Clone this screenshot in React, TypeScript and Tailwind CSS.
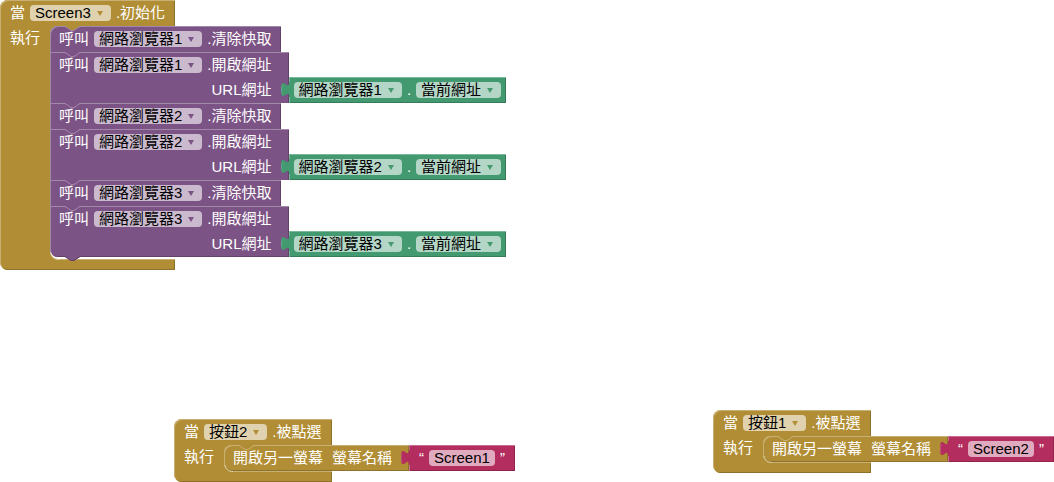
import type { ReactNode } from "react";

type Tone = "gold" | "purple" | "green" | "pink";

const surface: Record<Tone, string> = {
  gold: "bg-[#b18e35] shadow-[inset_1px_1px_0_#c8b072,inset_-1px_-1px_0_#8e722a]",
  purple: "bg-[#7c5385] shadow-[inset_1px_1px_0_#a387aa,inset_-1px_0_0_#63426a]",
  green: "bg-[#439970] shadow-[inset_1px_1px_0_#7bb89b,inset_-1px_-1px_0_#367a5a]",
  pink: "bg-[#b32d5e] shadow-[inset_1px_1px_0_#ca6c8e,inset_-1px_-1px_0_#8f244b]",
};

const purpleEnd = "bg-[#7c5385] shadow-[inset_1px_1px_0_#a387aa,inset_-1px_-1px_0_#63426a]";

const pill: Record<Tone, string> = {
  gold: "bg-[#e0d2ae]",
  purple: "bg-[#cbbace]",
  green: "bg-[#b4d6c6]",
  pink: "bg-[#e1abbf]",
};

const color: Record<Tone, string> = {
  gold: "#b18e35",
  purple: "#7c5385",
  green: "#439970",
  pink: "#b32d5e",
};

const light: Record<Tone, string> = {
  gold: "#c8b072",
  purple: "#a387aa",
  green: "#7bb89b",
  pink: "#ca6c8e",
};

function Dropdown({ tone, label, value }: { tone: Tone; label: string; value: string }) {
  return (
    <span className="relative flex">
      <select
        aria-label={label}
        defaultValue={value}
        className={`field-sizing-content h-4 appearance-none rounded py-0 pr-5 pl-[5px] leading-4 text-black ${pill[tone]}`}
      >
        <option>{value}</option>
      </select>
      <svg
        className="pointer-events-none absolute top-[6px] right-2"
        width="6"
        height="5"
        viewBox="0 0 6 5"
        aria-hidden="true"
      >
        <path d="M0 0H6L3 5Z" fill={color[tone]} />
      </svg>
    </span>
  );
}

function Notch({ above, own }: { above: Tone; own: Tone }) {
  return (
    <svg className="absolute top-0 left-[15px]" width="15" height="6" viewBox="0 0 15 6" aria-hidden="true">
      <path d="M0 0L6 4H9L15 0Z" fill={color[above]} />
      <path d="M0 .5L6 4.5H9L15 .5" fill="none" stroke={light[own]} />
    </svg>
  );
}

function Bump() {
  return (
    <svg className="absolute -bottom-1 left-[15px] z-10" width="15" height="5" viewBox="0 0 15 5" aria-hidden="true">
      <path d="M0 0V1L6 5H9L15 1V0Z" fill="#7c5385" />
      <path d="M0 .5L6 4.5H9L15 .5" fill="none" stroke="#63426a" />
    </svg>
  );
}

function ValueBlock({ tone, children }: { tone: Tone; children: ReactNode }) {
  return (
    <div className={`relative flex h-[26px] items-center gap-[5px] ${surface[tone]}`}>
      <svg className="absolute top-[5px] -left-2" width="9" height="15" viewBox="0 0 9 15" aria-hidden="true">
        <path d="M9 0H8C8 10 0 -8 0 7.5S8 5 8 15H9Z" fill={color[tone]} />
        <path d="M1.5 3.5C.8 4.5 .5 6 .5 8C.5 10 .8 11 1.5 11.5" fill="none" stroke={light[tone]} strokeOpacity=".6" />
      </svg>
      {children}
    </div>
  );
}

function ClearCache({ browser, above }: { browser: string; above: Tone }) {
  return (
    <div
      className={`relative flex h-[26px] w-max items-center gap-[5px] px-[9px] ${
        above === "gold" ? "rounded-tl-lg" : ""
      } ${surface.purple}`}
    >
      <Notch above={above} own="purple" />
      <span>呼叫</span>
      <Dropdown tone="purple" label="元件" value={browser} />
      <span>.清除快取</span>
    </div>
  );
}

function OpenAddress({ browser, last }: { browser: string; last: boolean }) {
  return (
    <div className="flex w-max items-end">
      <div className={`relative pr-[17px] pl-[9px] ${last ? `rounded-bl-lg ${purpleEnd}` : surface.purple}`}>
        <Notch above="purple" own="purple" />
        <div className="flex h-[26px] items-center gap-[5px]">
          <span>呼叫</span>
          <Dropdown tone="purple" label="元件" value={browser} />
          <span>.開啟網址</span>
        </div>
        <div className="flex h-[25px] items-center justify-end pb-[2px]">URL網址</div>
        {last && <Bump />}
      </div>
      <ValueBlock tone="green">
        <span className="pl-[5px]">
          <Dropdown tone="green" label="元件" value={browser} />
        </span>
        <span>.</span>
        <span className="pr-[5px]">
          <Dropdown tone="green" label="屬性" value="當前網址" />
        </span>
      </ValueBlock>
    </div>
  );
}

function OpenScreen({ screen }: { screen: string }) {
  return (
    <div className="flex w-max">
      <div className={`relative flex h-[26px] items-center gap-[9px] rounded-l-lg pr-[17px] pl-[9px] ${surface.gold}`}>
        <Notch above="gold" own="gold" />
        <span>開啟另一螢幕</span>
        <span>螢幕名稱</span>
      </div>
      <ValueBlock tone="pink">
        <span className="pl-[10px]">“</span>
        <input
          aria-label="螢幕名稱"
          defaultValue={screen}
          className={`field-sizing-content h-4 rounded px-[5px] leading-4 text-black ${pill.pink}`}
        />
        <span className="pr-[10px]">”</span>
      </ValueBlock>
    </div>
  );
}

function EventBlock({
  target,
  event,
  gap = false,
  children,
}: {
  target: string;
  event: string;
  gap?: boolean;
  children: ReactNode;
}) {
  return (
    <section className={`grid w-max rounded-l-lg ${surface.gold}`}>
      <header className="flex h-[26px] items-center gap-[5px] px-[10px]">
        <span>當</span>
        <Dropdown tone="gold" label="元件" value={target} />
        <span>.{event}</span>
      </header>
      <div className="flex w-0">
        <div className="flex h-[25px] w-[50px] shrink-0 items-center pb-[2px] pl-[10px]">執行</div>
        <div className={`relative w-max shrink-0 rounded-l-lg bg-white ${gap ? "pb-[2px]" : ""}`}>
          {children}
          <svg className="absolute -bottom-px left-0" width="9" height="9" viewBox="0 0 9 9" aria-hidden="true">
            <path d="M1 2C1.5 6 4 8.5 9 8.5" fill="none" stroke="#e0d2ae" />
          </svg>
        </div>
      </div>
      <div className="ml-[58px] h-[11px] border-t border-[#c8b072]" />
    </section>
  );
}

const browsers = ["網路瀏覽器1", "網路瀏覽器2", "網路瀏覽器3"];

export default function App() {
  return (
    <main className="relative min-h-screen overflow-hidden bg-white font-['Liberation_Sans','Noto_Sans_CJK_TC',sans-serif] text-[15px] leading-4 whitespace-nowrap text-white">
      <div className="absolute top-0 left-0">
        <EventBlock target="Screen3" event="初始化" gap>
          {browsers.map((browser, i) => (
            <div key={browser}>
              <ClearCache browser={browser} above={i === 0 ? "gold" : "purple"} />
              <OpenAddress browser={browser} last={i === browsers.length - 1} />
            </div>
          ))}
        </EventBlock>
      </div>
      <div className="absolute top-[419px] left-[174px]">
        <EventBlock target="按鈕2" event="被點選">
          <OpenScreen screen="Screen1" />
        </EventBlock>
      </div>
      <div className="absolute top-[410px] left-[713px]">
        <EventBlock target="按鈕1" event="被點選">
          <OpenScreen screen="Screen2" />
        </EventBlock>
      </div>
    </main>
  );
}
